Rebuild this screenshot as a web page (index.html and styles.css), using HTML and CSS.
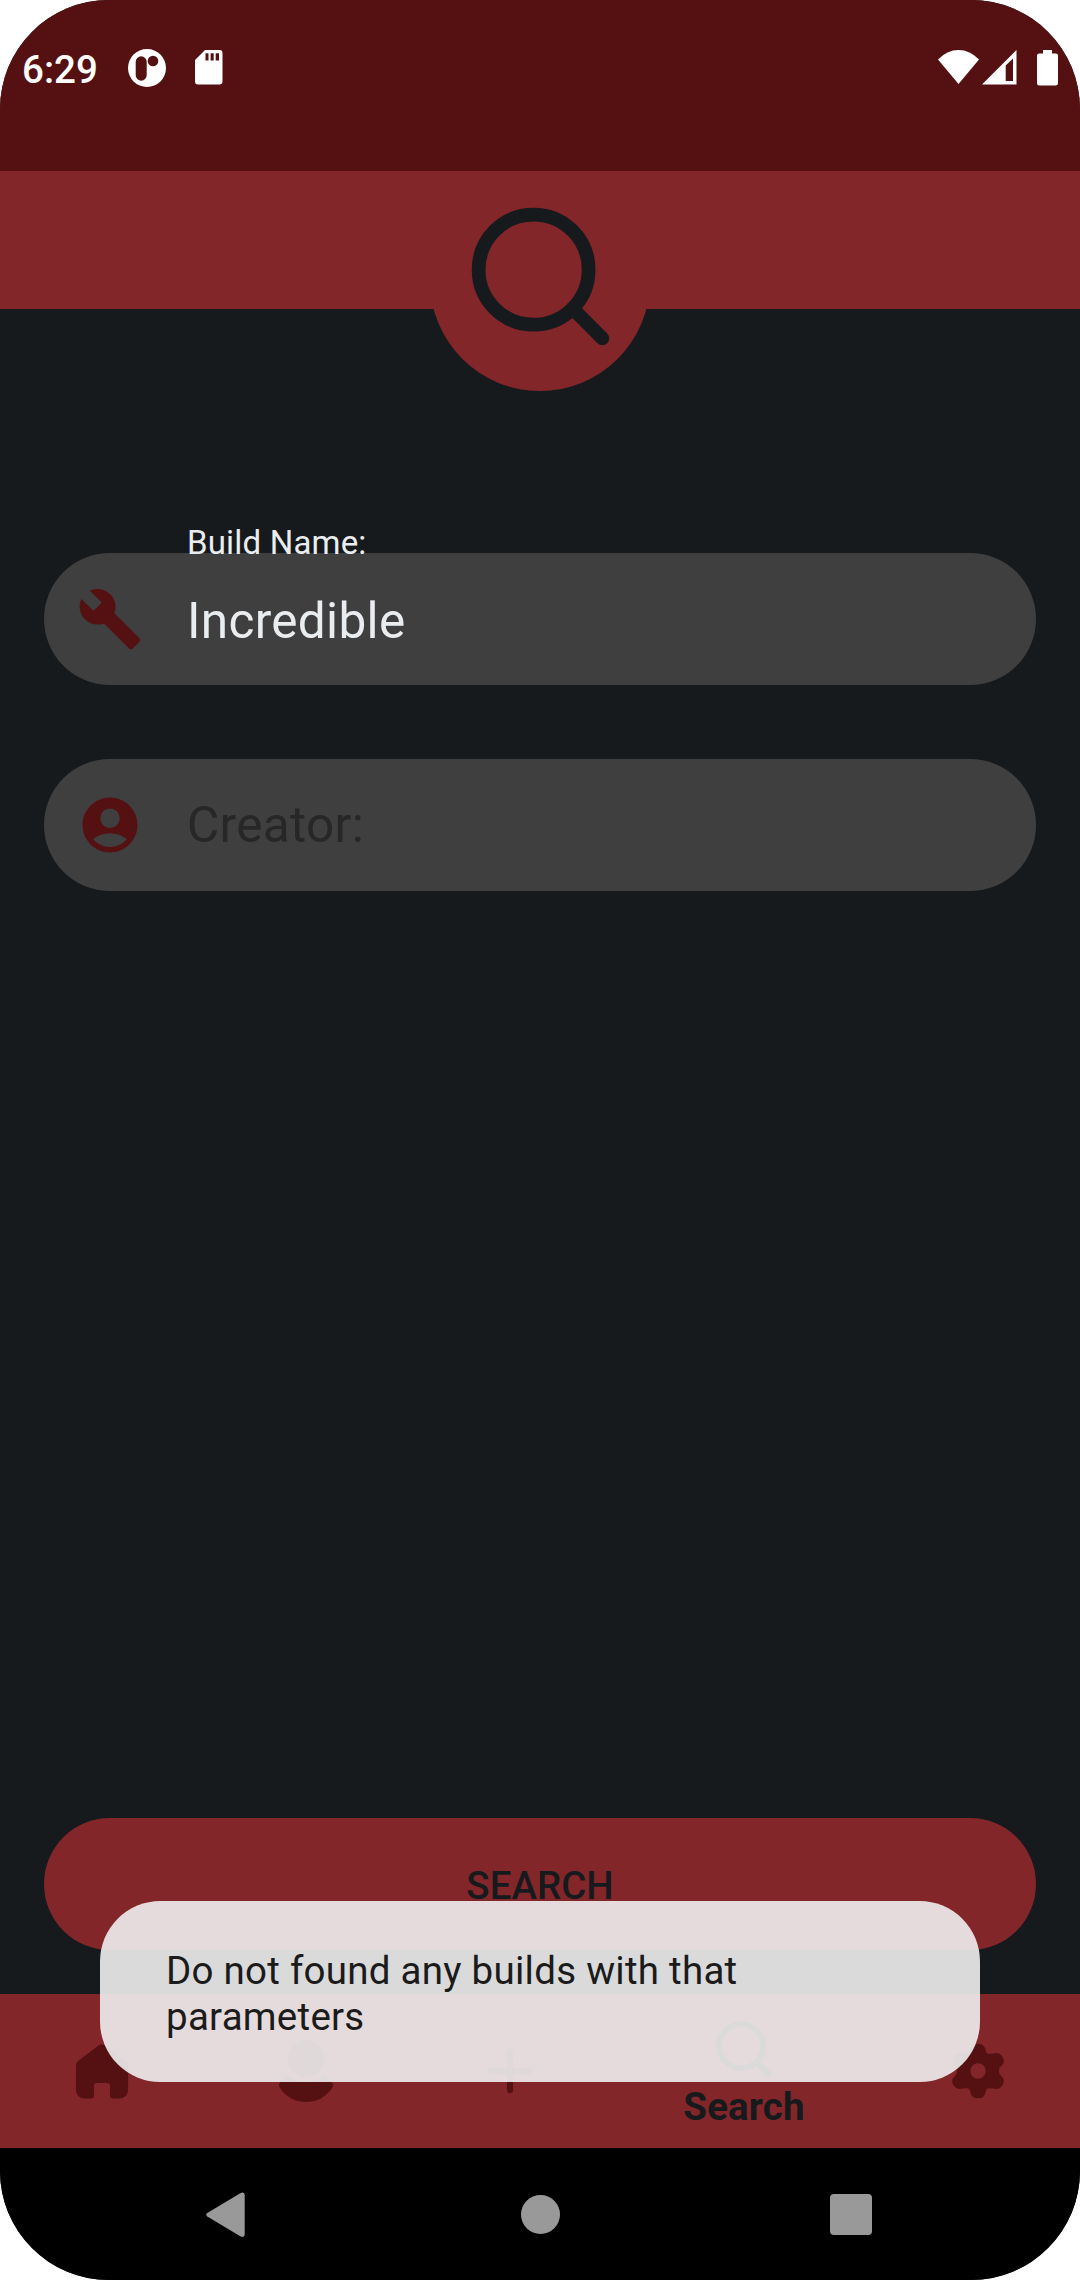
FILE: index.html
```html
<!DOCTYPE html>
<html lang="en">
<head>
<meta charset="utf-8">
<title>Search builds</title>
<link rel="stylesheet" href="styles.css">
</head>
<body>
<div class="screen">
  <header class="status-bar">
    <span class="clock">6:29</span>
    <svg class="notif-app" viewBox="0 0 38 38"><path fill-rule="evenodd" d="M19 0a19 19 0 1 1 0 38a19 19 0 1 1 0-38zM13.200 7.300a5.500 5.500 0 0 0-5.500 5.500v13.400a5.500 5.500 0 0 0 11 0v-13.400a5.500 5.500 0 0 0-5.500-5.500zM25 6.700a5.300 5.300 0 1 0 0 10.600a5.300 5.300 0 1 0 0-10.600z"/></svg>
    <svg class="notif-sd" viewBox="0 0 28 35"><path fill-rule="evenodd" d="M10 0H24.500Q27.500 0 27.500 3V31.500Q27.500 34.500 24.500 34.500H3Q0 34.500 0 31.500V10zM10.500 3.200V10.500H13.500V3.200zM15.600 3.200V10.500H18.700V3.200zM20.700 3.200V10.500H24V3.200z"/></svg>
    <div class="status-icons">
      <svg class="wifi" viewBox="0 0 42 35"><path d="M0 9.500Q9 0 20.500 0T41 9.500L20.500 34z"/></svg>
      <svg class="signal" viewBox="0 0 35 35"><path fill-rule="evenodd" d="M34.500 0V34.600H0zM31 8.500L23.700 15.500V31H31z"/></svg>
      <svg class="battery" viewBox="0 0 21 36"><path d="M6 0H15V3.500H18.800Q21 3.500 21 5.700V33.300Q21 35.500 18.800 35.500H2.200Q0 35.500 0 33.300V5.700Q0 3.500 2.200 3.500H6z"/></svg>
    </div>
  </header>

  <div class="banner">
    <div class="badge">
      <svg class="badge-icon line-icon" viewBox="0 0 24 24"><circle cx="11" cy="11" r="8"/><path d="M21 21l-4.350-4.350"/></svg>
    </div>
  </div>

  <main class="content">
    <div class="field">
      <svg class="field-icon" viewBox="0 0 24 24"><path d="M22.700 19l-9.100-9.100c.9-2.300.4-5-1.500-6.900-2-2-5-2.400-7.400-1.300L9 6 6 9 1.600 4.700C.4 7.100.9 10.100 2.900 12.100c1.900 1.900 4.600 2.400 6.900 1.500l9.100 9.100c.4.4 1 .4 1.400 0l2.300-2.300c.5-.4.5-1.100.1-1.400z"/></svg>
      <span class="field-label">Build Name:</span>
      <span class="field-value">Incredible</span>
    </div>
    <div class="field">
      <svg class="field-icon" viewBox="0 0 24 24"><path fill-rule="evenodd" d="M12 2C6.480 2 2 6.480 2 12s4.480 10 10 10 10-4.480 10-10S17.520 2 12 2zM12 6c1.930 0 3.500 1.570 3.500 3.500S13.930 13 12 13s-3.500-1.570-3.500-3.500S10.070 6 12 6zM12 20c-2.030 0-4.430-.82-6.140-2.880C7.550 15.800 9.680 15 12 15s4.450.8 6.140 2.120C16.430 19.180 14.030 20 12 20z"/></svg>
      <span class="field-hint">Creator:</span>
    </div>
    <div class="search-button">SEARCH</div>
  </main>

  <nav class="tabs">
    <div class="tab"><svg class="tab-icon" viewBox="0 0 24 24"><path d="M10.600 2.800Q12 1.700 13.400 2.800L20.600 8.300Q21.500 9 21.500 10.200V18.500Q21.500 22 18 22H15.900Q14.900 22 14.900 21V17.400Q14.900 16.400 13.900 16.400H10.100Q9.100 16.400 9.100 17.400V21Q9.100 22 8.100 22H6Q2.500 22 2.500 18.500V10.200Q2.500 9 3.400 8.300z"/></svg></div>
    <div class="tab"><svg class="tab-icon" viewBox="0 0 24 24"><circle cx="12" cy="7.400" r="6.800"/><path d="M5.500 13.400Q8 16 12 16T18.500 13.400Q20.700 14.600 21.700 16.600Q22 17.200 21.700 17.800C19.500 21.300 16 23.300 12 23.300S4.500 21.300 2.300 17.800Q2 17.200 2.300 16.600Q3.300 14.600 5.500 13.400z"/></svg></div>
    <div class="tab"><svg class="tab-icon line-icon line-icon-dark" viewBox="0 0 24 24"><path d="M12 5v14M5 12h14"/></svg></div>
    <div class="tab tab-active">
      <svg class="tab-icon line-icon" viewBox="0 0 24 24"><circle cx="11" cy="11" r="8"/><path d="M21 21l-4.350-4.350"/></svg>
      <span class="tab-label">Search</span>
    </div>
    <div class="tab"><svg class="tab-icon" viewBox="0 0 24 24"><path fill-rule="evenodd" d="M12 2.050Q14.400 2 14.800 4.500Q15 5.650 16 5.700Q16.800 5.700 17.600 5.600Q19.800 5.100 20.900 6.800Q22.100 8.700 20.600 10Q19.600 10.700 19.600 12T20.600 14Q22.100 15.300 20.900 17.200Q19.800 18.900 17.600 18.400Q16.800 18.300 16 18.300Q15 18.350 14.800 19.500Q14.400 21.950 12 21.950T9.200 19.500Q9 18.350 8 18.300Q7.200 18.300 6.400 18.400Q4.200 18.900 3.100 17.200Q1.900 15.300 3.400 14Q4.400 13.300 4.400 12T3.400 10Q1.900 8.700 3.100 6.800Q4.200 5.100 6.400 5.600Q7.200 5.700 8 5.700Q9 5.650 9.200 4.500Q9.600 2 12 2.050zM12 9.200a2.800 2.800 0 1 0 0 5.600a2.800 2.800 0 1 0 0-5.600z"/></svg></div>
  </nav>

  <footer class="system-nav">
    <svg class="nav-back" viewBox="0 0 39 46"><path d="M1.300 21L34.700 1Q38.700-.5 38.700 3.200V42.200Q38.700 46 34.700 44.500L1.300 24.500Q-.9 22.700 1.300 21z"/></svg>
    <div class="nav-home"></div>
    <div class="nav-recent"></div>
  </footer>

  <div class="toast">Do not found any builds with that parameters</div>
</div>
</body>
</html>
```
FILE: styles.css
```css
* { box-sizing: border-box; }

html { background: #fff; }

body {
  margin: 0;
  font-family: Roboto, "Noto Sans", sans-serif;
}

svg {
  display: block;
  flex: none;
  overflow: visible;
}

.screen {
  position: relative;
  display: flex;
  flex-direction: column;
  width: 1080px;
  height: 2280px;
  overflow: hidden;
  border-radius: 109px;
  background: #171a1c;
}

.status-bar {
  display: flex;
  align-items: center;
  height: 171px;
  padding: 0 22px 36px;
  background: #551112;
  color: #fff;
  fill: #fff;
}

.clock {
  width: 106px;
  padding-top: 5px;
  font-size: 38.500px;
  font-weight: 500;
  line-height: 46px;
}

.notif-app { width: 38px; height: 38px; }

.notif-sd {
  width: 28px;
  height: 35px;
  margin-left: 28.500px;
}

.status-icons {
  display: flex;
  align-items: center;
  margin-left: auto;
}

.wifi { width: 42px; height: 35px; margin-right: 2px; }
.signal { width: 35px; height: 35px; margin-right: 20px; }
.battery { width: 21px; height: 36px; }

.banner {
  display: flex;
  justify-content: center;
  height: 138px;
  background: #82262a;
}

.badge {
  display: flex;
  justify-content: center;
  width: 220px;
  height: 220px;
  padding-top: 23px;
  border-radius: 50%;
  background: #82262a;
}

.badge-icon { width: 165px; height: 165px; }

.line-icon {
  fill: none;
  stroke: #171a1c;
  stroke-width: 2;
  stroke-linecap: round;
}

.line-icon-dark { stroke: #551112; stroke-width: 2.200; }

.content {
  display: flex;
  flex: 1;
  flex-direction: column;
  gap: 74px;
  padding: 244px 44px 44px;
}

.field {
  position: relative;
  display: flex;
  align-items: center;
  gap: 44px;
  height: 132px;
  padding-left: 33px;
  border-radius: 66px;
  background: #3f3f3f;
  font-size: 49.500px;
  letter-spacing: .32px;
}

.field-icon {
  width: 66px;
  height: 66px;
  fill: #551112;
}

.field-label {
  position: absolute;
  top: -29px;
  left: 143px;
  color: #eaedf0;
  font-size: 33px;
  line-height: 38px;
  letter-spacing: .18px;
}

.field-value { padding-top: 3px; color: #eaedf0; }
.field-hint { color: #272727; }

.search-button {
  display: flex;
  align-items: center;
  justify-content: center;
  height: 132px;
  padding-top: 3px;
  margin-top: auto;
  border-radius: 66px;
  background: #82262a;
  color: #171a1c;
  font-size: 38.500px;
  font-weight: 500;
  line-height: 46px;
}

.tabs {
  display: flex;
  height: 154px;
  background: #82262a;
}

.tab {
  display: flex;
  flex-direction: column;
  align-items: center;
  justify-content: center;
  width: 204px;
}

.tab-active {
  justify-content: flex-start;
  width: 264px;
  padding-top: 22px;
}

.tab-icon { width: 66px; height: 66px; }
.tab-icon:not(.line-icon) { fill: #551112; }

.tab-label {
  color: #171a1c;
  font-size: 38.500px;
  font-weight: 700;
  line-height: 46px;
  margin-top: 2px;
  letter-spacing: .15px;
}

.system-nav {
  display: flex;
  align-items: center;
  height: 132px;
  padding: 1px 0 0 206px;
  background: #000;
}

.nav-back { width: 39px; height: 46px; fill: #999; }

.nav-home {
  width: 39px;
  height: 39px;
  margin: 0 270px 0 276px;
  border-radius: 50%;
  background: #999;
}

.nav-recent {
  width: 41.500px;
  height: 41.500px;
  border-radius: 4px;
  background: #999;
}

.toast {
  position: absolute;
  top: 1901px;
  left: 100px;
  width: 880px;
  height: 181px;
  padding: 47px 66px 45px;
  border-radius: 60.500px;
  background: rgba(239, 240, 239, .9);
  color: #1b1b1b;
  font-size: 38.500px;
  line-height: 46px;
  letter-spacing: .26px;
}
```
